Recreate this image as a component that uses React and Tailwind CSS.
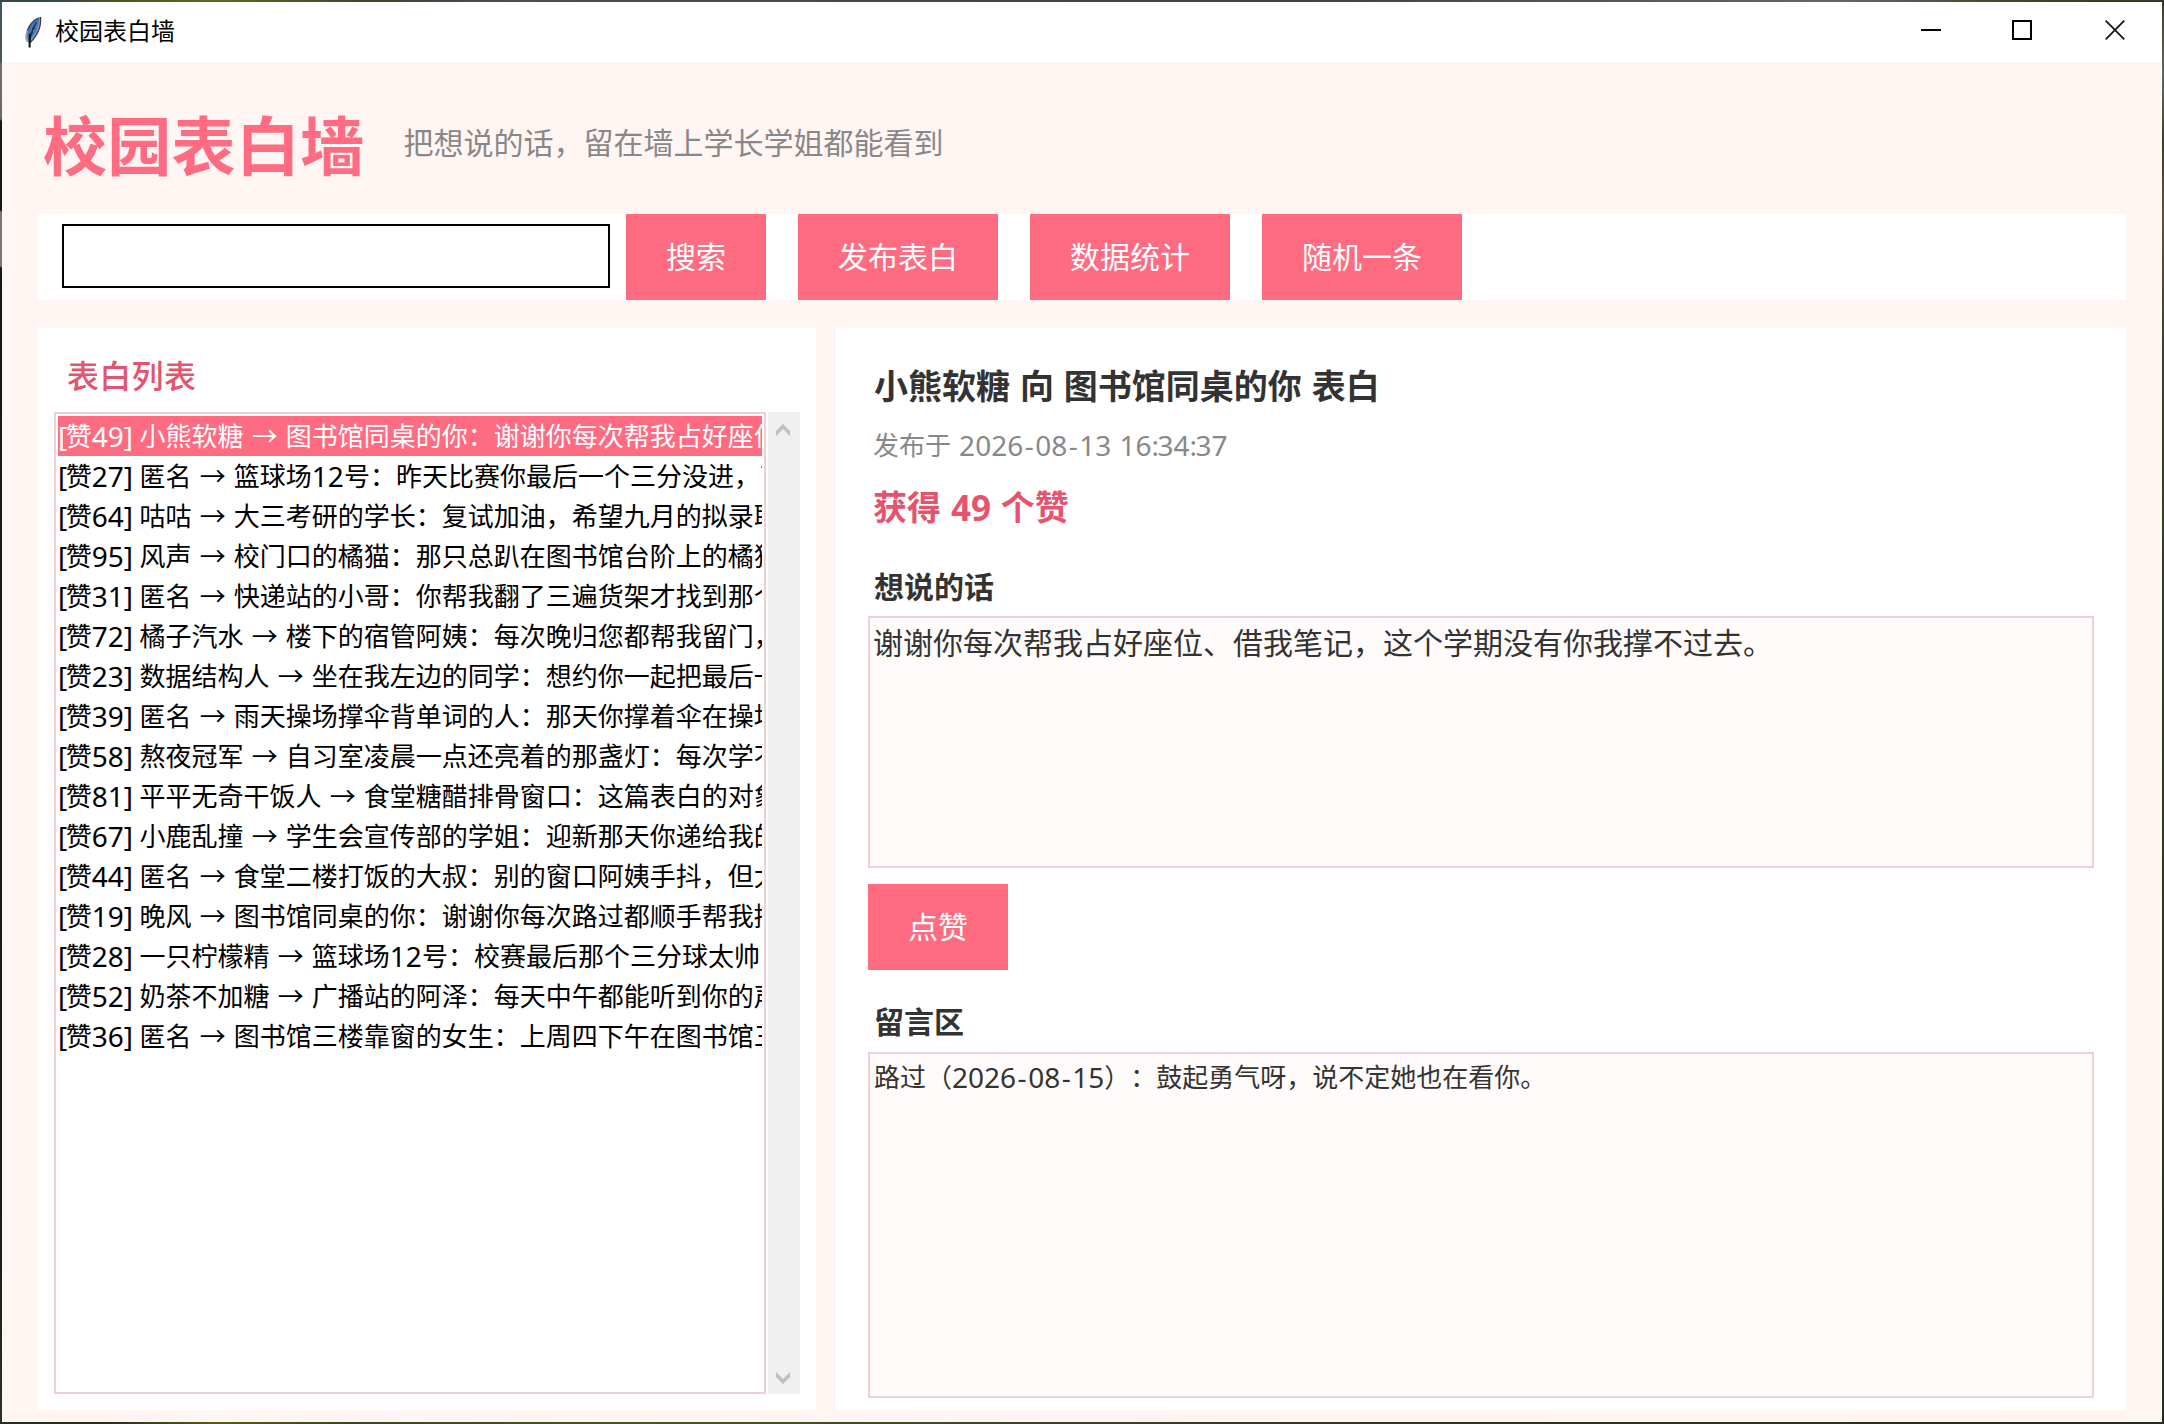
/**
 * Campus confession wall - desktop window with list and detail panes.
 */
import React, { useState } from 'react';
import clsx from 'clsx';

const POSTS = [
  '[赞49] 小熊软糖 → 图书馆同桌的你：谢谢你每次帮我占好座位',
  '[赞27] 匿名 → 篮球场12号：昨天比赛你最后一个三分没进，可',
  '[赞64] 咕咕 → 大三考研的学长：复试加油，希望九月的拟录取',
  '[赞95] 风声 → 校门口的橘猫：那只总趴在图书馆台阶上的橘猫',
  '[赞31] 匿名 → 快递站的小哥：你帮我翻了三遍货架才找到那个',
  '[赞72] 橘子汽水 → 楼下的宿管阿姨：每次晚归您都帮我留门，',
  '[赞23] 数据结构人 → 坐在我左边的同学：想约你一起把最后一',
  '[赞39] 匿名 → 雨天操场撑伞背单词的人：那天你撑着伞在操场',
  '[赞58] 熬夜冠军 → 自习室凌晨一点还亮着的那盏灯：每次学不',
  '[赞81] 平平无奇干饭人 → 食堂糖醋排骨窗口：这篇表白的对象',
  '[赞67] 小鹿乱撞 → 学生会宣传部的学姐：迎新那天你递给我的',
  '[赞44] 匿名 → 食堂二楼打饭的大叔：别的窗口阿姨手抖，但大',
  '[赞19] 晚风 → 图书馆同桌的你：谢谢你每次路过都顺手帮我接',
  '[赞28] 一只柠檬精 → 篮球场12号：校赛最后那个三分球太帅了',
  '[赞52] 奶茶不加糖 → 广播站的阿泽：每天中午都能听到你的声',
  '[赞36] 匿名 → 图书馆三楼靠窗的女生：上周四下午在图书馆三',
];

const ACTIONS = ['发布表白', '数据统计', '随机一条'];

// Latin runs use a slightly larger humanist face than the Chinese text
function Mixed({ text, latin = 'text-[28px]' }) {
  return text
    .split(/(-|:|[[\]]|[0-9]+| )/)
    .filter(Boolean)
    .map((part, i) => {
      if (!/^[\x20-\x7e]+$/.test(part)) return <React.Fragment key={i}>{part}</React.Fragment>;
      return (
        <span
          key={i}
          className={clsx(
            "font-['Noto_Sans',sans-serif] leading-none align-[-1px]",
            latin,
            part === ' ' && 'tracking-[0.8px]',
            part === '-' && 'px-[1.5px]',
            part === ':' && 'tracking-[-1.5px]',
            (part === '[' || part === ']') && 'tracking-[-1.5px]'
          )}
        >
          {part}
        </span>
      );
    });
}

function FeatherIcon() {
  return (
    <svg className="w-[18px] h-8" viewBox="0 0 18 32">
      <path d="M16.5 .8C10 2 5 7.500 2.500 14.500C.8 20 1 24 3 26L5.500 27.500C11 24.500 15 17.500 16.300 10C17 6 17.300 3 16.500 .8Z" fill="#9aa0a6" />
      <path d="M15 2C10 4 6 9 4 15C2.800 19 3 22 4.500 24.500C9 21.500 12.500 16 14 10C15 6.500 15.300 4 15 2Z" fill="#3f7cc4" />
      <path d="M16.500 1C17 6 16 13 12 19C10 22.500 8 25 5.800 26.800M15 2C10 4 6 8 3.500 14.500" fill="none" stroke="#3b4048" strokeWidth="1.300" />
      <path d="M12.500 6C9.500 11 7 17 5.800 24M8 13L11 12M5.500 18L9 17" fill="none" stroke="#16283f" strokeWidth="1.300" />
      <path d="M5.800 18L5.600 31.500" stroke="#111" strokeWidth="2" />
    </svg>
  );
}

function TitleBar() {
  return (
    <div className="h-[60px] bg-white flex items-center justify-between pl-[22px] pr-[37px]">
      <div className="flex items-center">
        <FeatherIcon />
        <span className="ml-[13px] text-2xl leading-none text-black mb-1">校园表白墙</span>
      </div>
      <div className="flex items-center mb-1">
        <svg className="w-5 h-5" viewBox="0 0 20 20">
          <path d="M0 10H20" stroke="#000" strokeWidth="2" />
        </svg>
        <svg className="w-5 h-5 ml-[71px]" viewBox="0 0 20 20">
          <rect x="1" y="1" width="18" height="18" fill="none" stroke="#000" strokeWidth="2" />
        </svg>
        <svg className="w-5 h-5 ml-[73px]" viewBox="0 0 20 20">
          <path d="M.7 .7L19.300 19.300M19.300 .7L.7 19.300" stroke="#111" strokeWidth="1.700" />
        </svg>
      </div>
    </div>
  );
}

function PinkButton({ children, className }) {
  return (
    <button className={clsx('h-[86px] px-[39.5px] pb-1 bg-[#ff6b81] text-white text-[30px] leading-none', className)}>
      {children}
    </button>
  );
}

function ScrollBar() {
  return (
    <div className="w-8 ml-0.5 bg-[#f0f0f0] flex flex-col justify-between items-center pt-3 pb-2.5 pr-0.5">
      <svg className="w-3.5 h-3" viewBox="0 0 14 12">
        <path d="M7 0L14 7V12L7 5L0 12V7Z" fill="#bfbfbf" />
      </svg>
      <svg className="w-3.5 h-3" viewBox="0 0 14 12">
        <path d="M7 12L14 5V0L7 7L0 0V5Z" fill="#bfbfbf" />
      </svg>
    </div>
  );
}

export default function App() {
  const [selected, setSelected] = useState(0);

  return (
    <div className="w-[2164px] h-[1424px] overflow-hidden flex flex-col font-['Noto_Sans_CJK_SC',sans-serif] [text-spacing-trim:space-all]">
      {/* Desktop showing around the window */}
      <div className="h-0.5 shrink-0 bg-[linear-gradient(90deg,#35474c_0%,#3a4a48_3%,#4a5220_5%,#5a6b1e_10%,#3d4630_17%,#4a4f4c_24%,#3c4438_60%,#666_85%,#46422c_93%,#333626_100%)]" />

      <div className="flex-1 flex min-h-0">
        <div className="w-0.5 bg-[linear-gradient(180deg,#41545c_0px,#4a5558_60px,#707070_62px,#686868_117px,#15181a_119px,#15181a_208px,#777_210px,#777_264px,#15181a_266px,#1b1d1c_1250px,#2c3320_100%)]" />

        {/* Window */}
        <div className="w-[2160px] flex flex-col bg-[#fff6f4]">
          <TitleBar />

          {/* Header */}
          <div className="h-[152px] pt-[7px] pl-[41px] flex items-center">
            <h1 className="text-[64px] leading-none font-bold text-[#ff6b81] tracking-[0.3px]">校园表白墙</h1>
            <p className="ml-[39px] mb-0.5 text-[30px] leading-none text-[#888]">把想说的话，留在墙上学长学姐都能看到</p>
          </div>

          {/* Toolbar */}
          <div className="mx-9 h-[86px] bg-white pl-6 flex items-center">
            <input className="w-[548px] h-16 mb-0.5 border-2 border-black bg-white px-2 text-[30px] outline-none" />
            <PinkButton className="ml-4 w-[140px]">搜索</PinkButton>
            {ACTIONS.map((label) => (
              <PinkButton key={label} className="ml-8 w-[200px]">
                {label}
              </PinkButton>
            ))}
          </div>

          <div className="mx-9 mt-7 h-[1082px] flex gap-5">
            {/* List */}
            <div className="w-[778px] bg-white px-4 pb-4 flex flex-col">
              <h2 className="h-[84px] pt-2 pl-[13px] flex items-center text-[32px] leading-none font-medium text-[#e5536f] tracking-[0.3px]">
                表白列表
              </h2>
              <div className="flex-1 flex">
                <div className="w-[712px] border-2 border-[#f0d0d2] p-0.5">
                  <ul className="overflow-hidden">
                    {POSTS.map((post, i) => (
                      <li
                        key={post}
                        onClick={() => setSelected(i)}
                        className={clsx(
                          'h-10 overflow-hidden whitespace-nowrap text-[26px] leading-[38px]',
                          i === selected ? 'bg-[#ff6b81] text-white' : 'text-black'
                        )}
                      >
                        <Mixed text={post} />
                      </li>
                    ))}
                  </ul>
                </div>
                <ScrollBar />
              </div>
            </div>

            {/* Detail */}
            <div className="flex-1 bg-white px-8 pt-[37px]">
              <h2 className="h-10 pl-[6px] text-[34px] leading-10 font-bold text-[#333]">
                <Mixed text="小熊软糖 向 图书馆同桌的你 表白" latin="text-[35px]" />
              </h2>
              <p className="h-9 mt-[21px] pl-[5px] text-[26px] leading-9 text-[#888]">
                <Mixed text="发布于 2026-08-13 16:34:37" />
              </p>
              <p className="h-10 mt-6 pl-[5px] text-[34px] leading-10 font-bold text-[#e5536f]">
                <Mixed text="获得 49 个赞" latin="text-[35px]" />
              </p>

              <h3 className="h-10 mt-[39px] pl-[6px] text-[30px] leading-10 font-bold text-[#333]">想说的话</h3>
              <div className="h-[252px] mt-[11px] border-2 border-[#f0d0d2] bg-[#fffbfa] pt-[5px] pl-[3px] text-[30px] leading-9 text-[#333]">
                谢谢你每次帮我占好座位、借我笔记，这个学期没有你我撑不过去。
              </div>

              <PinkButton className="mt-4 block w-[140px]">点赞</PinkButton>

              <h3 className="h-10 mt-[30px] pl-[6px] text-[30px] leading-10 font-bold text-[#333]">留言区</h3>
              <div className="h-[346px] mt-3 border-2 border-[#f0d0d2] bg-[#fffbfa] pt-1 pl-1 text-[26px] leading-9 text-[#333]">
                <Mixed text="路过（2026-08-15）：鼓起勇气呀，说不定她也在看你。" />
              </div>
            </div>
          </div>
        </div>

        <div className="w-0.5 bg-[linear-gradient(180deg,#3a3a2a_0%,#666_5%,#3c3c28_10%,#5a5538_15%,#3a3c26_25%,#262c22_100%)]" />
      </div>

      <div className="h-0.5 shrink-0 bg-[linear-gradient(90deg,#22301f_0%,#26301f_5%,#5a5a10_10%,#3e4420_16%,#4c5426_30%,#33381f_60%,#262a20_100%)]" />
    </div>
  );
}
